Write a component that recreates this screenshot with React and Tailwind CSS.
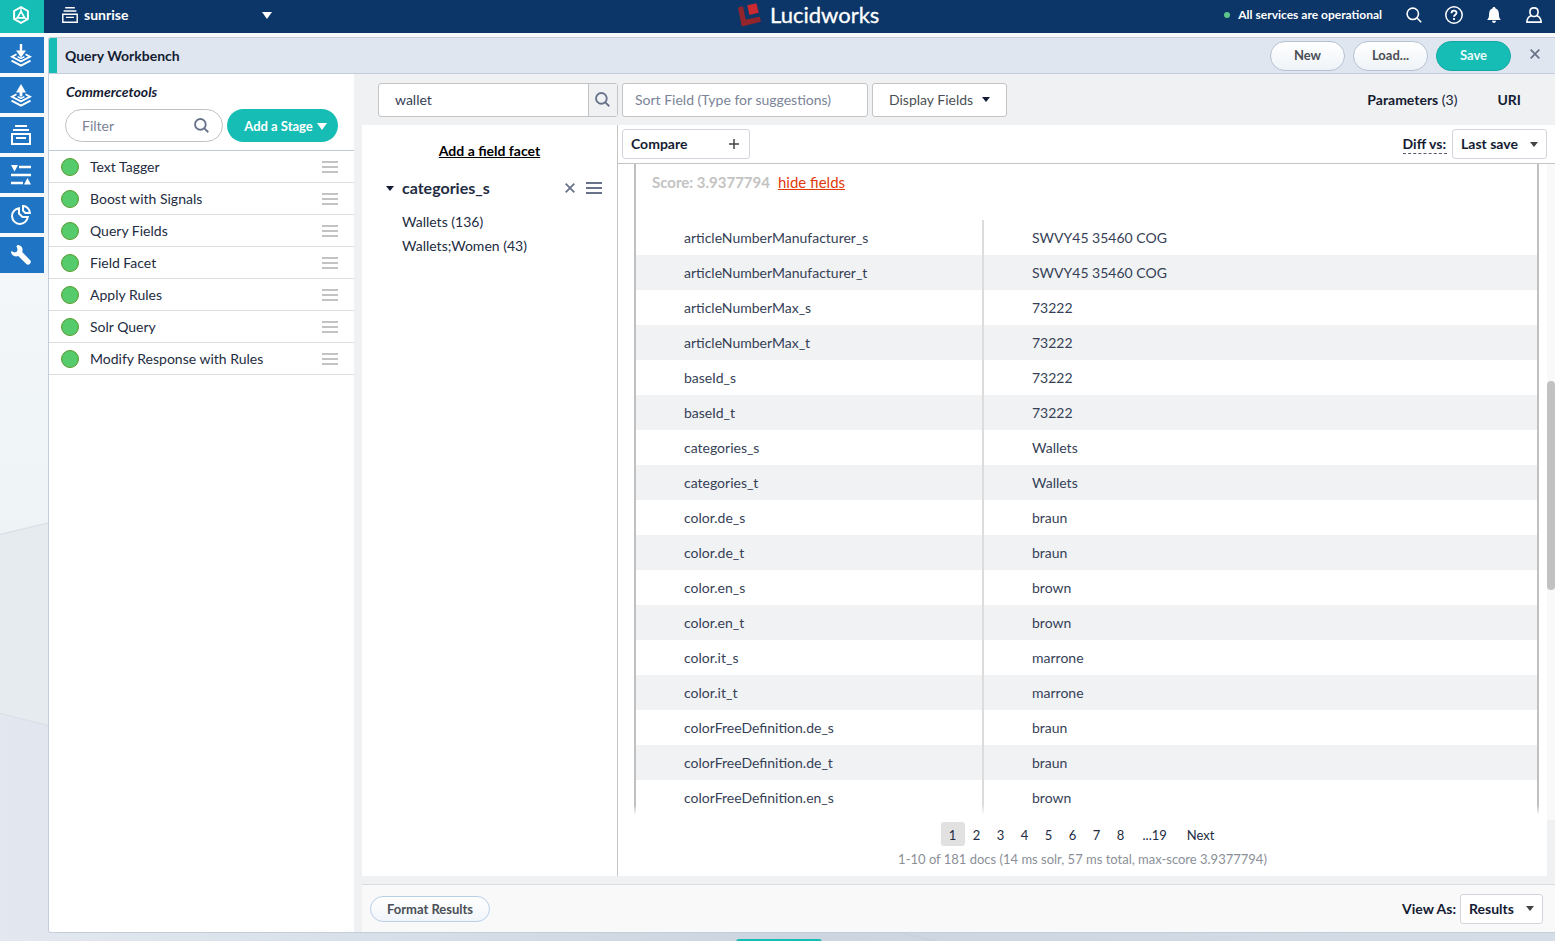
import { useState } from "react";

const stages = [
  "Text Tagger",
  "Boost with Signals",
  "Query Fields",
  "Field Facet",
  "Apply Rules",
  "Solr Query",
  "Modify Response with Rules",
];

const fields = [
  ["articleNumberManufacturer_s", "SWVY45 35460 COG"],
  ["articleNumberManufacturer_t", "SWVY45 35460 COG"],
  ["articleNumberMax_s", "73222"],
  ["articleNumberMax_t", "73222"],
  ["baseId_s", "73222"],
  ["baseId_t", "73222"],
  ["categories_s", "Wallets"],
  ["categories_t", "Wallets"],
  ["color.de_s", "braun"],
  ["color.de_t", "braun"],
  ["color.en_s", "brown"],
  ["color.en_t", "brown"],
  ["color.it_s", "marrone"],
  ["color.it_t", "marrone"],
  ["colorFreeDefinition.de_s", "braun"],
  ["colorFreeDefinition.de_t", "braun"],
  ["colorFreeDefinition.en_s", "brown"],
];

const pages = ["1", "2", "3", "4", "5", "6", "7", "8"];

function Caret({ className }) {
  return (
    <svg className={className} viewBox="0 0 10 6" preserveAspectRatio="none" fill="currentColor">
      <path d="M0 0h10L5 6z" />
    </svg>
  );
}

function SearchIcon({ className, strokeWidth = 2 }) {
  return (
    <svg className={className} viewBox="0 0 16 16" fill="none" stroke="currentColor" strokeWidth={strokeWidth}>
      <circle cx="6.8" cy="6.8" r="5.7" />
      <path d="M10.8 10.8L15.2 15.2" />
    </svg>
  );
}

function CloseIcon({ className }) {
  return (
    <svg className={className} viewBox="0 0 10 10" fill="none" stroke="currentColor" strokeWidth="1.8">
      <path d="M0.7 0.7l8.6 8.6M9.3 0.7L0.7 9.3" />
    </svg>
  );
}

function Handle({ className }) {
  return (
    <svg className={className} viewBox="0 0 16 12" fill="currentColor">
      <path d="M0 0h16v2H0zM0 5h16v2H0zM0 10h16v2H0z" />
    </svg>
  );
}

function CollectionIcon({ className, strokeWidth = 2 }) {
  return (
    <svg className={className} viewBox="0 0 20 20" fill="none" stroke="currentColor" strokeWidth={strokeWidth}>
      <path d="M4 1h12M2 5h16M1 9h18v10H1zM5 13h10" />
    </svg>
  );
}

function LayersIcon({ up }) {
  return (
    <svg className="h-6 w-[22px]" viewBox="0 0 22 24" fill="none" stroke="currentColor">
      <path d="M6.5 11.2L2 13.800 11 18.400l9-4.600L15.500 11.200" strokeWidth="1.900" />
      <path d="M1.500 17.600L11 22.600l9.500-5" strokeWidth="2" />
      {up ? (
        <>
          <path d="M11 7v6.500" strokeWidth="2.800" />
          <path d="M6 9.500L11 1l5 8.500z" fill="currentColor" stroke="none" />
        </>
      ) : (
        <>
          <path d="M11 1v8" strokeWidth="2.400" />
          <path d="M6 7.400h10l-5 7z" fill="currentColor" stroke="none" />
        </>
      )}
      <path d="M7.600 13.600L11 15.300l3.400-1.700" strokeWidth="1.500" />
    </svg>
  );
}

function SlidersIcon() {
  return (
    <svg className="size-5" viewBox="0 0 20 20" fill="currentColor">
      <path d="M0 0h7L3.5 6.5zM8 0.800h12v2.400H8zM0 8.800h20v2.400H0zM0 16.800h12v2.400H0zM13 19.600h7L16.500 13z" />
    </svg>
  );
}

function PieIcon() {
  return (
    <svg className="size-5" viewBox="0 0 20 20" fill="none" stroke="currentColor" strokeWidth="2">
      <path d="M8 3.200A7.900 7.900 0 1 0 16.800 12H11.500L8 8.500z" />
      <path d="M12 1.100v4.500L14.400 8H18.900A7 7 0 0 0 12 1.100z" />
    </svg>
  );
}

function WrenchIcon() {
  return (
    <svg className="size-5" viewBox="0 0 20 20" fill="currentColor">
      <path d="M7.500 0C11 0.800 12.300 4 11.200 7l8.200 8.500c1.600 2.200-1.500 5.300-3.800 3.800L7.200 11C4 12.200 0.800 10.700 0 7.200c0-1 .8-1.300 1.500-.7L3.300 7.500 5.800 6.800 6.600 4.500 5.700 2C5.300.8 6.200-.2 7.500 0z" />
    </svg>
  );
}

function TopBar() {
  return (
    <header className="relative flex h-[33px] shrink-0 items-center bg-[#0c3667] text-white">
      <div className="flex h-full w-11 items-center justify-center bg-[#15bdb4] pb-[3px] pr-0.5">
        <svg className="h-[18px] w-4" viewBox="0 0 16 18" fill="none" stroke="currentColor" strokeWidth="2">
          <path d="M8 1.100l6.900 3.900v8L8 16.900 1.100 13V5z" />
          <path d="M8 5.500l3.700 6.300H4.300z" strokeWidth="1.700" />
          <path d="M8 1v4M1.500 13l3-1.200M14.500 13l-3-1.200" strokeWidth="1.200" />
        </svg>
      </div>
      <div className="ml-[18px] flex w-[210px] items-center pb-[3px]">
        <CollectionIcon className="size-4" strokeWidth={1.8} />
        <span className="ml-[6px] text-[14px] font-bold leading-5">sunrise</span>
        <Caret className="ml-auto h-[7px] w-2.5" />
      </div>
      <div className="absolute left-[738px] top-0 flex h-[30px] items-center">
        <svg className="size-6" viewBox="0 0 24 24">
          <path d="M0 4.500l5-1.200 2.700 13.200 14-2.700 1.300 5L3.700 23.500z" fill="#92242c" />
          <path d="M9.300 2.200L18.500 0.200l2.200 9.600-9.300 2.200z" fill="#cb2a30" />
        </svg>
        <span className="ml-2 text-[22px] leading-[30px] [-webkit-text-stroke:0.300px]">Lucidworks</span>
      </div>
      <div className="ml-auto flex items-center pb-[3px] pr-[13px]">
        <span className="size-1.5 rounded-full bg-[#5cc68a]" />
        <span className="ml-2 text-[12px] font-bold leading-5">All services are operational</span>
        <SearchIcon className="ml-6 size-4" strokeWidth={1.600} />
        <svg className="ml-[23px] size-[18px]" viewBox="0 0 18 18" fill="none" stroke="currentColor" strokeWidth="1.500">
          <circle cx="9" cy="9" r="8.200" />
          <path d="M6.500 7.200C6.500 3.800 11.600 4 11.500 7c-.1 1.700-2.500 1.700-2.500 3.700M9 12v2" strokeWidth="1.800" />
        </svg>
        <svg className="ml-[23px] h-4 w-[16px]" viewBox="0 0 16 16" fill="currentColor">
          <path d="M8 0c1 0 1.500.6 1.500 1.500C12 2.300 12.900 4.500 12.900 7c0 3 .6 4.600 2.100 6H1c1.500-1.400 2.100-3 2.100-6 0-2.500.9-4.700 3.400-5.500C6.500.6 7 0 8 0zM6 13.800h4C9.800 15.300 9 16 8 16s-1.800-.7-2-2.200z" />
        </svg>
        <svg className="ml-6 size-4" viewBox="0 0 16 16" fill="none" stroke="currentColor" strokeWidth="1.600">
          <path d="M8 .9C5.200.9 3.900 2.700 3.900 5S5.500 9.500 8 9.500 12.100 7.300 12.100 5 10.800.9 8 .9z" />
          <path d="M5.200 8.800C2.500 9.800.9 11.500.9 15.100h14.200c0-3.600-1.600-5.300-4.300-6.300" />
        </svg>
      </div>
    </header>
  );
}

function NavRail() {
  const items = [
    <LayersIcon />,
    <LayersIcon up />,
    <CollectionIcon className="size-5" />,
    <SlidersIcon />,
    <PieIcon />,
    <WrenchIcon />,
  ];
  return (
    <nav className="w-11 shrink-0">
      <div className="flex flex-col gap-1 bg-[#f8f9fc] pt-1">
        {items.map((icon, i) => (
          <div key={i} className="flex h-9 items-center justify-center bg-[#1f74c4] pr-0.5 text-white">
            {icon}
          </div>
        ))}
      </div>
    </nav>
  );
}

function TitleBar() {
  return (
    <div className="flex h-9 shrink-0 items-center border-b border-[#c3cddb] bg-[#e0e6ef]">
      <div className="h-full w-2 bg-[#15bdb4]" />
      <h1 className="ml-2 text-[14px] font-bold leading-5 text-[#141c33]">Query Workbench</h1>
      <div className="ml-auto flex items-center gap-2 pr-[15px] text-[13px] font-bold">
        <button className="h-[30px] w-[75px] rounded-full border border-[#b6c2d3] bg-linear-to-b from-white to-[#eff3f8] pt-px text-[#4b4f55]">
          New
        </button>
        <button className="h-[30px] w-[75px] rounded-full border border-[#b6c2d3] bg-linear-to-b from-white to-[#eff3f8] pt-px text-[#4b4f55]">
          Load...
        </button>
        <button className="h-[30px] w-[75px] rounded-full border border-[#12a9a4] bg-[#15bdb4] pt-px text-[#eafafa]">
          Save
        </button>
        <CloseIcon className="mb-1 ml-[11px] size-2.5 text-[#6a7489]" />
      </div>
    </div>
  );
}

function StagePanel() {
  return (
    <aside className="w-[305px] shrink-0 bg-white">
      <div className="h-[77px] border-b border-[#bfcad9] pl-4 pt-2">
        <h2 className="pl-px text-[14px] font-bold italic leading-5 text-[#141c33]">Commercetools</h2>
        <div className="mt-[7px] flex gap-1">
          <div className="flex h-[33px] w-[158px] items-center justify-between rounded-full border border-[#c1c1c1] pl-4 pr-[13px]">
            <span className="text-[14px] text-[#7b8394]">Filter</span>
            <SearchIcon className="size-[15px] text-[#68738b]" strokeWidth={2} />
          </div>
          <button className="flex h-[33px] w-[111px] items-center justify-center gap-1 rounded-full bg-[#15bdb4] pl-1.5 pt-0.5 text-[13px] font-bold text-white">
            Add a Stage
            <Caret className="h-[7px] w-2.5" />
          </button>
        </div>
      </div>
      <ul>
        {stages.map((stage) => (
          <li key={stage} className="flex h-8 items-center border-b border-[#dcdee1] pl-3 pr-4">
            <span className="size-[18px] rounded-full border border-[#5a9b32] bg-[#56cb6b]" />
            <span className="ml-[11px] text-[14px] leading-5 text-[#232c42]">{stage}</span>
            <Handle className="ml-auto h-3 w-4 text-[#c3c3c3]" />
          </li>
        ))}
      </ul>
    </aside>
  );
}

function SearchBar({ query, onChange }) {
  return (
    <div className="flex h-[51px] shrink-0 items-center pl-4 pr-[34px] text-[14px]">
      <div className="flex h-[34px] w-60 rounded-[3px] border border-[#c4c4c4] bg-white">
        <input
          value={query}
          onChange={(e) => onChange(e.target.value)}
          className="min-w-0 flex-1 bg-transparent pl-4 text-[#363f57] outline-none"
        />
        <div className="flex w-[29px] items-center justify-center border-l border-[#c4c4c4] bg-[#f0f1f3] pb-px pr-0.5 text-[#68738b]">
          <SearchIcon className="size-[15px]" strokeWidth={2} />
        </div>
      </div>
      <div className="ml-1 flex h-[34px] w-[246px] items-center rounded-[3px] border border-[#c4c4c4] bg-white pl-3 text-[#7b8498]">
        Sort Field (Type for suggestions)
      </div>
      <button className="ml-1 flex h-[34px] w-[135px] items-center rounded-[3px] border border-[#c4c4c4] bg-white pl-4 text-[#4b4f55]">
        Display Fields
        <Caret className="ml-[9px] h-[5px] w-2 text-[#141c33]" />
      </button>
      <div className="ml-auto text-[#141c33]">
        <b>Parameters</b> (3)
      </div>
      <b className="ml-10 text-[#141c33]">URI</b>
    </div>
  );
}

function FacetPanel() {
  return (
    <section className="w-64 shrink-0 border-r border-[#c4c4c4] bg-white">
      <div className="pt-4 text-center text-[14px] font-bold leading-5 text-black underline">Add a field facet</div>
      <div className="mt-[17px] flex items-center pl-6 pr-[15px]">
        <Caret className="h-[5px] w-2 text-[#141c33]" />
        <span className="ml-2 text-[16px] font-bold leading-5 text-[#232c42]">categories_s</span>
        <CloseIcon className="ml-auto size-2.5 text-[#68738b]" />
        <Handle className="ml-[11px] h-3 w-4 text-[#68738b]" />
      </div>
      <ul className="mt-3 pl-10 text-[14px] leading-6 text-[#232c42]">
        <li>Wallets (136)</li>
        <li>Wallets;Women (43)</li>
      </ul>
    </section>
  );
}

function Results() {
  return (
    <section className="flex min-w-0 flex-1 flex-col">
      <div className="flex h-[39px] shrink-0 items-center border-b border-[#c4c4c4] bg-white pl-1 pr-2 text-[14px] font-bold text-[#141c33]">
        <div className="flex h-[30px] w-32 items-center justify-between rounded-[3px] border border-[#d3d5dc] pl-2 pr-2.5">
          <span className="pb-0.5">Compare</span>
          <svg className="size-2.5 text-[#444]" viewBox="0 0 10 10" fill="none" stroke="currentColor" strokeWidth="1.500">
            <path d="M5 0v10M0 5h10" />
          </svg>
        </div>
        <span className="ml-auto border-b border-dashed border-[#555b6e] pr-px leading-[19px]">Diff vs:</span>
        <div className="ml-[5px] flex h-[30px] w-[95px] items-center justify-between rounded-[3px] border border-[#d3d5dc] px-2">
          <span className="pb-0.5">Last save</span>
          <Caret className="h-[5px] w-2 text-[#444]" />
        </div>
      </div>
      <div className="flex min-h-0 flex-1">
        <div className="flex min-w-0 flex-1 flex-col bg-white">
          <div className="relative ml-4 mr-2 h-[651px] border-x-2 border-[#c0c0c0]">
            <div className="flex h-14 gap-2 pl-4 pt-2 text-[15px] leading-5">
              <span className="font-bold text-[#c3c3c3]">Score: 3.9377794</span>
              <a className="text-[#df3a0c] underline">hide fields</a>
            </div>
            {fields.map(([name, value]) => (
              <div key={name} className="flex h-[35px] items-center text-[14px] text-[#363f57] even:bg-white odd:bg-[#f0f2f4]">
                <div className="flex h-full w-[348px] items-center border-r-2 border-[#dcdcdc] pb-px pl-12">{name}</div>
                <div className="pb-px pl-12">{value}</div>
              </div>
            ))}
            <div className="absolute -inset-x-0.5 bottom-0 h-2.5 bg-linear-to-b from-transparent to-white" />
          </div>
          <div className="mt-[7px] flex h-6 justify-center pr-2.5 text-[13px] leading-[26px] text-[#232c42]">
            {pages.map((p) => (
              <span key={p} className={p === "1" ? "w-6 rounded-[3px] bg-[#e1e1e1] text-center" : "w-6 text-center"}>
                {p}
              </span>
            ))}
            <span className="ml-2.5">...19</span>
            <span className="ml-5">Next</span>
          </div>
          <div className="mt-[3px] text-center text-[13px] leading-5 text-[#8b8f98]">
            1-10 of 181 docs (14 ms solr, 57 ms total, max-score 3.9377794)
          </div>
        </div>
        <div className="w-2 shrink-0">
          <div className="h-[656px] bg-[#f9f9f9] pt-[217px]">
            <div className="h-[209px] rounded-full bg-[#c1c1c1]" />
          </div>
        </div>
      </div>
    </section>
  );
}

function Footer() {
  return (
    <div className="mt-2 flex h-12 shrink-0 items-center border-t border-[#d9dce0] bg-[#f9f9f9] pl-2 pr-3 text-[14px] font-bold text-[#141c33]">
      <button className="h-[26px] w-[120px] rounded-full border border-[#b9cfe8] bg-linear-to-b from-white to-[#f1f5fa] pt-0.5 text-[13px] text-[#4b4f55]">
        Format Results
      </button>
      <span className="ml-auto">View As:</span>
      <div className="ml-1 flex h-[30px] w-[83px] items-center justify-between rounded-[3px] border border-[#d3d5dc] bg-white px-2">
        Results
        <Caret className="h-[5px] w-2 text-[#444]" />
      </div>
    </div>
  );
}

export default function App() {
  const [query, setQuery] = useState("wallet");

  return (
    <div className="relative flex h-[941px] w-[1555px] flex-col overflow-hidden bg-[#f8f9fc] font-[Lato,sans-serif]">
      {/* Page backdrop */}
      <svg className="absolute inset-0 h-full w-full" viewBox="0 0 1555 941">
        <defs>
          <linearGradient id="sky" x1="0" y1="0" x2="0" y2="1">
            <stop offset="0" stopColor="#f8f9fc" />
            <stop offset="0.3" stopColor="#f3f7fa" />
            <stop offset="0.56" stopColor="#eef3f6" />
          </linearGradient>
          <linearGradient id="ground" x1="0" y1="0" x2="1" y2="0">
            <stop offset="0" stopColor="#e3e8f0" />
            <stop offset="0.25" stopColor="#d7dfe8" />
            <stop offset="0.5" stopColor="#ccd5df" />
            <stop offset="1" stopColor="#d5dde7" />
          </linearGradient>
        </defs>
        <path d="M0 0h1555v941H0z" fill="url(#sky)" />
        <path d="M0 534.500L60 520v210L0 713z" fill="#e6ebef" />
        <path d="M0 714l48 12v205h1507v10H0z" fill="url(#ground)" />
        <path d="M0 534.500l48-11.500M0 713.500l48 12" stroke="#dbe1e8" strokeWidth="1.500" />
        <path d="M896 932l40 9" stroke="#c8d1dc" strokeWidth="1.500" />
      </svg>

      <TopBar />
      <div className="relative flex flex-1">
        <NavRail />
        <main className="ml-1 mt-1 flex h-[896px] min-w-0 flex-1 flex-col overflow-hidden rounded-l-[3px] border border-r-0 border-[#c3cddb] bg-[#f0f1f3]">
          <TitleBar />
          <div className="flex min-h-0 flex-1">
            <StagePanel />
            <div className="ml-2 flex min-w-0 flex-1 flex-col">
              <SearchBar query={query} onChange={setQuery} />
              <div className="flex min-h-0 flex-1">
                <FacetPanel />
                <Results />
              </div>
              <Footer />
            </div>
          </div>
        </main>
      </div>
      <div className="absolute left-[736px] top-[939px] h-1 w-[86px] rounded-t-[3px] bg-[#15bdb4]" />
    </div>
  );
}
